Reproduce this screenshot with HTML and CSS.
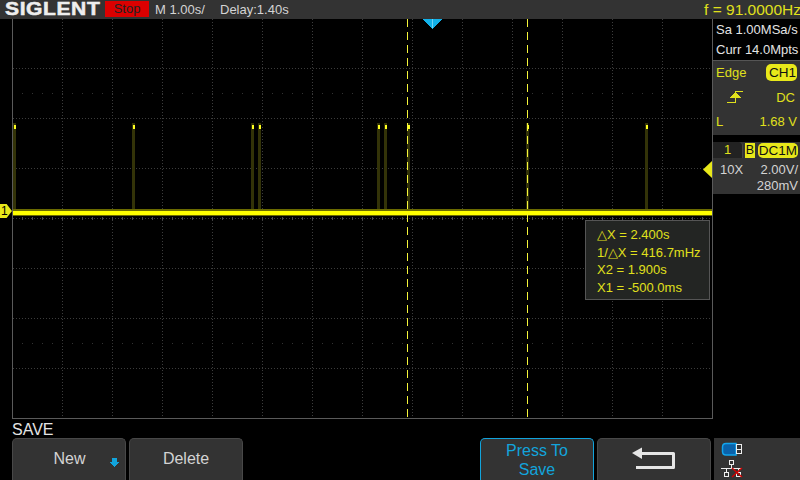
FILE: index.html
```html
<!DOCTYPE html>
<html lang="en">
<head>
<meta charset="utf-8">
<title>SIGLENT scope</title>
<link rel="stylesheet" href="styles.css">
</head>
<body>
<div class="screen">
  <header class="topbar">
    <div class="logo"><span>SIGLENT</span></div>
    <div class="stop">Stop</div>
    <div class="timebase">M 1.00s/</div>
    <div class="delay">Delay:1.40s</div>
    <div class="freq">f = 91.0000Hz</div>
  </header>
  <main class="main">
    <section class="plot">
      <svg class="canvas" viewBox="0 19 713 400" width="713" height="400" shape-rendering="crispEdges">
        <g class="grid-v">
          <path d="M62.5 19V418M112.5 19V418M162.5 19V418M212.5 19V418M262.5 19V418M312.5 19V418M362.5 19V418M412.5 19V418M462.5 19V418M512.5 19V418M562.5 19V418M612.5 19V418M662.5 19V418"/>
        </g>
        <g class="grid-h">
          <path d="M13 68.5H712M13 118.5H712M13 168.5H712M13 218.5H712M13 268.5H712M13 318.5H712M13 368.5H712"/>
        </g>
        <g class="grid-minor">
          <path d="M12 93.5H712M12 343.5H712"/>
        </g>
        <path class="center-ticks" d="M12 218.5H712"/>
        <path class="frame" d="M12.5 19V418.5H712.5V19"/>
        <path class="pulse" d="M14.5 123V212M133.5 123V212M252.5 123V212M259.5 123V212M378.5 123V212M385.5 123V212M408.5 123V212M527.5 123V212M646.5 123V212"/>
        <path class="peak" d="M14.5 125V129M133.5 125V129M252.5 125V129M259.5 125V129M378.5 125V129M385.5 125V129M408.5 125V129M527.5 125V129M646.5 125V129"/>
        <rect class="trace-glow" x="13" y="209" width="699" height="7"/>
        <rect class="trace" x="13" y="211" width="699" height="4"/>
        <path class="cursor" d="M407.5 19V418M527.5 19V418"/>
        <path class="trig-pos" d="M423 19H442L432.5 29Z"/>
        <path class="trig-pos-line" d="M432.5 19V28"/>
      </svg>
      <div class="ch-badge">1</div>
      <div class="level-marker"></div>
      <div class="measure">
        <div>△X = 2.400s</div>
        <div>1/△X = 416.7mHz</div>
        <div>X2 = 1.900s</div>
        <div>X1 = -500.0ms</div>
      </div>
    </section>
    <aside class="side">
      <div class="acq">
        <div>Sa 1.00MSa/s</div>
        <div>Curr 14.0Mpts</div>
      </div>
      <div class="trigger">
        <div class="row">
          <span class="yellow">Edge</span>
          <span class="pill">CH1</span>
        </div>
        <div class="row">
          <svg class="slope" viewBox="0 0 18 12" width="18" height="12" shape-rendering="crispEdges">
            <path class="slope-line" d="M0 11.500H8.500V0.500H16"/>
            <path class="slope-head" d="M3 7H14L8.500 1Z"/>
          </svg>
          <span class="yellow">DC</span>
        </div>
        <div class="row">
          <span class="yellow">L</span>
          <span class="yellow">1.68 V</span>
        </div>
      </div>
      <div class="channel">
        <div class="ch-head">
          <span class="ch-num">1</span>
          <span class="bw">B</span>
          <span class="pill coupling">DC1M</span>
        </div>
        <div class="ch-row"><span>10X</span><span>2.00V/</span></div>
        <div class="ch-row end"><span>280mV</span></div>
      </div>
    </aside>
  </main>
  <div class="menu-title">SAVE</div>
  <footer class="softkeys">
    <button class="key key-new"><span class="key-label">New</span>
      <svg class="down" viewBox="0 0 11 9" width="11" height="9" shape-rendering="crispEdges"><path d="M3 0H8V4H11L5.500 9L0 4H3Z"/></svg>
    </button>
    <button class="key">Delete</button>
    <div class="spacer"></div>
    <button class="key key-active">Press To<br>Save</button>
    <button class="key">
      <svg class="back" viewBox="0 0 44 24" width="44" height="24">
        <path class="back-line" d="M8 6.500H41.500V20.500H4"/>
        <path class="back-head" d="M0 6L10 0.500V12Z"/>
      </svg>
    </button>
    <div class="status">
      <svg viewBox="0 0 30 40" width="30" height="40">
        <path class="usb-body" d="M15 3.500H5Q1.500 3.500 1.500 7V11.500Q1.500 15 5 15H15Z"/>
        <g shape-rendering="crispEdges">
          <rect class="usb-plug" x="15.500" y="4.500" width="5" height="9"/>
          <path class="usb-plug" d="M15.500 9.500H20.500"/>
          <rect class="net" x="8.500" y="20.500" width="4" height="4"/>
          <path class="net" d="M10.500 25V28.500M0 28.500H21M5.500 28.500V32M17.500 28.500V32"/>
          <rect class="net" x="3.500" y="32.500" width="4" height="4"/>
          <rect class="net" x="15.500" y="32.500" width="4" height="4"/>
        </g>
        <path class="net-x" d="M11 28L21 37M21 28L11 37"/>
      </svg>
    </div>
  </footer>
</div>
</body>
</html>
```
FILE: styles.css
```css
* { box-sizing: border-box; }
html, body { margin: 0; padding: 0; background: #000; }
body { width: 800px; height: 480px; overflow: hidden; font-family: "Liberation Sans", Arial, sans-serif; }
.screen { width: 800px; height: 480px; display: flex; flex-direction: column; background: #000; }

.topbar { height: 19px; background: #333; display: flex; align-items: center; color: #d4d4d4; font-size: 13px; line-height: 19px; flex: none; }
.logo { width: 105px; padding-left: 5px; font-weight: 700; font-size: 18px; letter-spacing: 0.5px; color: #eee; -webkit-text-stroke: 0.5px #eee; white-space: nowrap; }
.logo span { display: inline-block; transform: scaleX(1.17); transform-origin: left center; }
.stop { width: 44px; height: 16px; align-self: flex-start; margin-top: 1px; background: #dc0000; color: #222; font-size: 13px; line-height: 16px; text-align: center; }
.timebase { margin-left: 6px; width: 65px; }
.delay { width: 83px; }
.freq { margin-left: auto; margin-right: -1px; font-size: 15.500px; color: #e0e01c; }

.main { height: 400px; display: flex; flex: none; }
.plot { position: relative; width: 713px; height: 400px; flex: none; }
.canvas { display: block; }
.grid-v path { stroke: #3c3c3c; stroke-width: 1; stroke-dasharray: 1 2; fill: none; }
.grid-h path { stroke: #3c3c3c; stroke-width: 1; stroke-dasharray: 1 2; fill: none; }
.grid-minor path { stroke: #333; stroke-width: 1; stroke-dasharray: 1 9; fill: none; }
.center-ticks { stroke: #4a4a4a; stroke-width: 3; stroke-dasharray: 1 9; fill: none; }
.frame { stroke: #5a5a5a; stroke-width: 1; fill: none; }
.pulse { stroke: #333308; stroke-width: 3; fill: none; }
.peak { stroke: #ffff20; stroke-width: 2; fill: none; }
.trace-glow { fill: #6a6a00; }
.trace { fill: #ffff00; }
.cursor { stroke: #f4f43a; stroke-width: 1; stroke-dasharray: 8 5; fill: none; }
.trig-pos { fill: #12b2ea; }
.trig-pos-line { stroke: #6fd4f6; stroke-width: 1; fill: none; }

.ch-badge { position: absolute; left: 0; top: 185px; width: 12px; height: 14px; background: #e8e81a; color: #000; font-size: 12px; line-height: 15px; padding-left: 1px; clip-path: polygon(0 0, 55% 0, 100% 50%, 55% 100%, 0 100%); }
.level-marker { position: absolute; left: 703px; top: 142px; width: 9px; height: 17px; background: #e8e81a; clip-path: polygon(100% 0, 100% 100%, 0 50%); }

.measure { position: absolute; left: 585px; top: 201px; width: 125px; height: 80px; background: #232523; border: 1px solid #555; color: #e0e01c; font-size: 13px; line-height: 17.500px; padding: 5px 0 0 11px; white-space: nowrap; }

.side { width: 87px; flex: none; display: flex; flex-direction: column; color: #e4e4e4; }
.acq { height: 41px; padding: 1px 0 0 3px; font-size: 13px; line-height: 20px; white-space: nowrap; }
.trigger { height: 75px; background: #333; border-top: 1px solid #555; padding: 1px 3px 0 3px; font-size: 13px; display: flex; flex-direction: column; }
.row { display: flex; justify-content: space-between; align-items: center; height: 21px; }
.row:nth-child(2) { padding-left: 11px; padding-right: 2px; height: 28px; }
.yellow { color: #e0e01c; }
.pill { background: #e8e81a; color: #111; border-radius: 5px; padding: 0 3px; height: 17px; line-height: 17px; width: 31px; text-align: center; font-size: 13.500px; }
.slope { display: block; }
.slope-line { stroke: #e0e01c; stroke-width: 1; fill: none; }
.slope-head { fill: #e0e01c; }

.channel { margin-top: 7px; height: 52px; background: #333; font-size: 13px; }
.ch-head { height: 16px; display: flex; align-items: center; background: #333; }
.ch-num { width: 30px; height: 16px; background: #222; text-align: center; line-height: 16px; color: #e0e01c; font-size: 13px; border-right: 1px solid #444; border-top-right-radius: 4px; }
.bw { margin-left: 2px; width: 10px; height: 15px; background: #e8e81a; color: #111; font-size: 12.500px; line-height: 15px; text-align: center; }
.coupling { margin-left: 3px; width: 40px; height: 15px; line-height: 15px; padding: 0; font-size: 13.500px; }
.ch-row { display: flex; justify-content: space-between; padding: 4px 2px 0 7px; height: 20px; line-height: 16px; color: #d4d4d4; }
.ch-row.end { justify-content: flex-end; height: 16px; padding-top: 0; line-height: 15px; }

.menu-title { height: 19px; flex: none; padding: 1px 0 0 12px; font-size: 16px; line-height: 20px; color: #e4e4e4; }
.softkeys { height: 42px; flex: none; display: flex; padding-left: 12px; }
.key { position: relative; width: 114px; height: 42px; margin: 0 3px 0 0; padding: 0 0 2px; background: #333; border: 1px solid #484848; border-bottom: none; border-radius: 5px 5px 0 0; color: #d4d4d4; font-family: inherit; font-size: 16px; line-height: 19px; display: flex; align-items: center; justify-content: center; text-align: center; }
.key-label { display: block; margin-left: 1px; }
.down { position: absolute; right: 5px; top: 19px; fill: #12a4dc; }
.key-active { border-color: #12a4dc; color: #12a4dc; padding: 0; }
.spacer { width: 234px; flex: none; }
.status { width: 86px; height: 42px; background: #333; padding: 2px 0 0 7px; flex: none; }
.status svg { display: block; }
.back-line { stroke: #e6e6e6; stroke-width: 3; fill: none; stroke-linejoin: round; }
.back-head { fill: #e6e6e6; }
.usb-body { fill: #0a62aa; stroke: #12a4ec; stroke-width: 1.500; }
.usb-plug { fill: #333; stroke: #eee; stroke-width: 1; }
.net { fill: none; stroke: #eee; stroke-width: 1; }
.net-x { stroke: #d00000; stroke-width: 1.500; fill: none; }
```
